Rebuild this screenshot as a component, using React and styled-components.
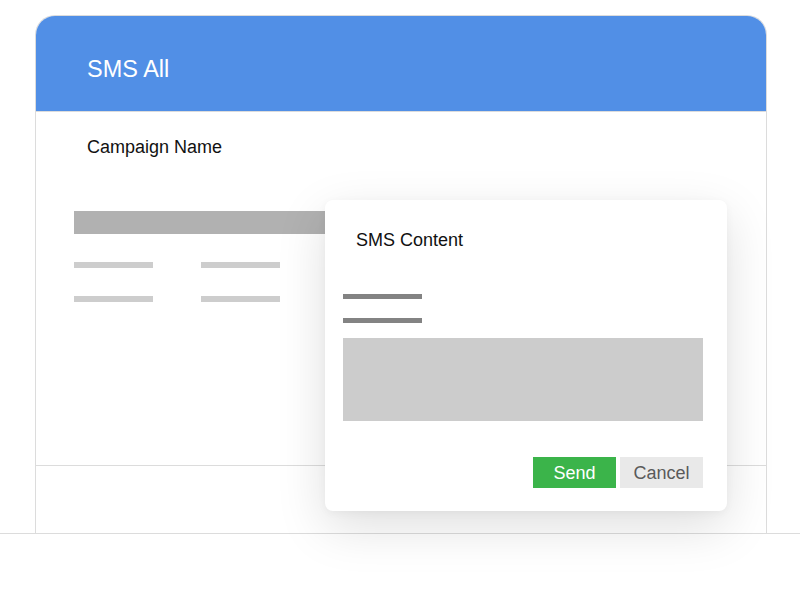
import React from "react";
import styled, { createGlobalStyle } from "styled-components";

const Global = createGlobalStyle`
  html, body { margin: 0; padding: 0; background: #ffffff; }
  body { font-family: "Liberation Sans", Arial, Helvetica, sans-serif; }
  * { box-sizing: border-box; }
`;

const Page = styled.div`
  position: relative;
  width: 800px;
  height: 592px;
  overflow: hidden;
  background: #fff;
`;

const Stage = styled.div`
  padding: 15px 0 0 35px;
`;

const Card = styled.div`
  width: 732px;
  height: 518px;
  border: 1px solid #dcdcdc;
  border-bottom: none;
  border-radius: 20px 20px 0 0;
  overflow: hidden;
  display: flex;
  flex-direction: column;
  background: #fff;
`;

const Header = styled.div`
  height: 96px;
  flex: none;
  background: #518fe6;
  border-bottom: 1px solid #dcdcdc;
  padding: 39px 0 0 51px;
  color: #fff;
  font-size: 23.5px;
  line-height: 28px;
`;

const Body = styled.div`
  height: 353px;
  flex: none;
  padding: 25px 0 0 38px;
`;

const Label = styled.div`
  margin-left: 13px;
  font-size: 18px;
  line-height: 20px;
  color: #111;
`;

const Bar = styled.div`
  margin-top: 54px;
  width: 620px;
  height: 23px;
  background: #b1b1b1;
`;

const LineGrid = styled.div`
  margin-top: 28px;
  display: grid;
  grid-template-columns: 79px 79px;
  column-gap: 48px;
  row-gap: 28px;
`;

const Line = styled.div`
  width: ${(p) => p.$w || 79}px;
  height: ${(p) => p.$h || 6}px;
  background: ${(p) => p.$c || "#cdcdcd"};
`;

const Footer = styled.div`
  flex: 1;
  border-top: 1px solid #dcdcdc;
`;

const Floor = styled.div`
  border-top: 1px solid #dcdcdc;
  height: 59px;
`;

const Modal = styled.div`
  position: absolute;
  left: 325px;
  top: 200px;
  width: 402px;
  height: 311px;
  background: #fff;
  border-radius: 8px;
  box-shadow: 0 16px 50px rgba(0, 0, 0, 0.13), 0 2px 8px rgba(0, 0, 0, 0.04);
  padding: 30px 24px 23px 18px;
  display: flex;
  flex-direction: column;
`;

const ModalTitle = styled.div`
  margin-left: 13px;
  font-size: 18px;
  line-height: 20px;
  color: #111;
`;

const Stack = styled.div`
  margin-top: ${(p) => p.$mt}px;
`;

const TextArea = styled.div`
  margin-top: 15px;
  width: 360px;
  height: 83px;
  background: #cccccc;
`;

const Actions = styled.div`
  margin-top: 36px;
  display: flex;
  justify-content: flex-end;
  gap: 4px;
`;

const Button = styled.div`
  width: 83px;
  height: 31px;
  display: flex;
  align-items: center;
  justify-content: center;
  font-size: 18px;
  padding-top: 1px;
  background: ${(p) => (p.$primary ? "#3bb44a" : "#e9e9e9")};
  color: ${(p) => (p.$primary ? "#ffffff" : "#5a5a5a")};
`;

export default function App() {
  return (
    <Page>
      <Global />
      <Stage>
        <Card>
          <Header>SMS All</Header>
          <Body>
            <Label>Campaign Name</Label>
            <Bar />
            <LineGrid>
              <Line />
              <Line />
              <Line />
              <Line />
            </LineGrid>
          </Body>
          <Footer />
        </Card>
      </Stage>
      <Floor />
      <Modal>
        <ModalTitle>SMS Content</ModalTitle>
        <Stack $mt={44}>
          <Line $h={5} $c="#838383" />
        </Stack>
        <Stack $mt={19}>
          <Line $h={5} $c="#838383" />
        </Stack>
        <TextArea />
        <Actions>
          <Button $primary>Send</Button>
          <Button>Cancel</Button>
        </Actions>
      </Modal>
    </Page>
  );
}
